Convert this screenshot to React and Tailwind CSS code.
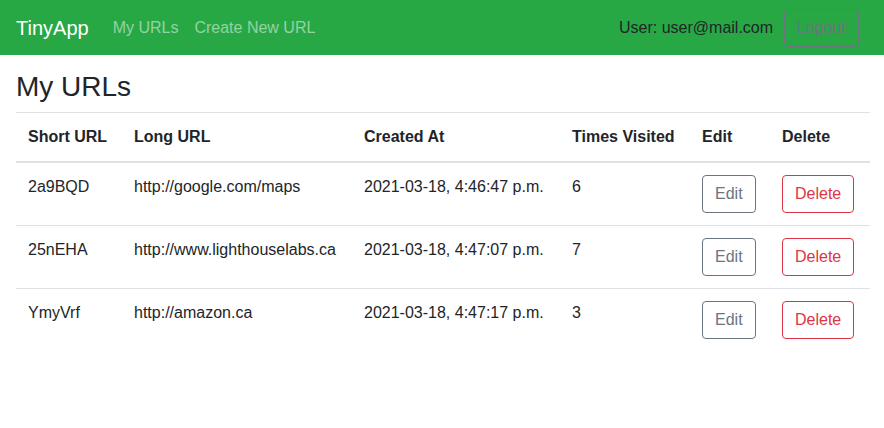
const urls = [
  { id: '2a9BQD', long: 'http://google.com/maps', created: '2021-03-18, 4:46:47 p.m.', visits: 6 },
  { id: '25nEHA', long: 'http://www.lighthouselabs.ca', created: '2021-03-18, 4:47:07 p.m.', visits: 7 },
  { id: 'YmyVrf', long: 'http://amazon.ca', created: '2021-03-18, 4:47:17 p.m.', visits: 3 },
]

export default function App() {
  return (
    <div className="min-h-screen bg-white text-[#212529] text-[16px] leading-6 font-['Liberation_Sans',Arial,sans-serif]">
      {/* Navbar */}
      <header className="bg-[#28a745] h-[55px] pl-4 pr-[25px] flex items-center justify-between">
        <div className="flex items-center">
          <span className="text-white text-[20px] leading-[30px] mr-4">TinyApp</span>
          <nav className="flex">
            <a className="px-2 text-white/50">My URLs</a>
            <a className="px-2 text-white/50">Create New URL</a>
          </nav>
        </div>
        <div className="flex items-center">
          <span className="text-[#212529] mr-[11px]">User: user@mail.com</span>
          <button className="h-[38px] px-3 border border-[#6c757d] rounded text-[#6c757d]">Logout</button>
        </div>
      </header>

      <main className="pl-4 pr-[14px]">
        <h3 className="text-[28px] leading-[34px] mt-[15px] mb-2">My URLs</h3>
        <table className="w-full table-fixed border-collapse">
          <thead>
            <tr className="border-t border-[#dee2e6] border-b-2">
              <th className="w-[106px] p-3 text-left font-bold">Short URL</th>
              <th className="w-[230px] p-3 text-left font-bold">Long URL</th>
              <th className="w-[208px] p-3 text-left font-bold">Created At</th>
              <th className="w-[130px] p-3 text-left font-bold">Times Visited</th>
              <th className="w-[80px] p-3 text-left font-bold">Edit</th>
              <th className="p-3 text-left font-bold">Delete</th>
            </tr>
          </thead>
          <tbody>
            {urls.map((u) => (
              <tr key={u.id} className="border-t border-[#dee2e6] first:border-t-0">
                <td className="p-3 align-top">{u.id}</td>
                <td className="p-3 align-top">{u.long}</td>
                <td className="p-3 align-top">{u.created}</td>
                <td className="p-3 align-top">{u.visits}</td>
                <td className="p-3 align-top">
                  <button className="h-[38px] px-3 border border-[#6c757d] rounded text-[#6c757d]">Edit</button>
                </td>
                <td className="p-3 align-top">
                  <button className="h-[38px] px-3 border border-[#dc3545] rounded text-[#dc3545]">Delete</button>
                </td>
              </tr>
            ))}
          </tbody>
        </table>
      </main>
    </div>
  )
}
